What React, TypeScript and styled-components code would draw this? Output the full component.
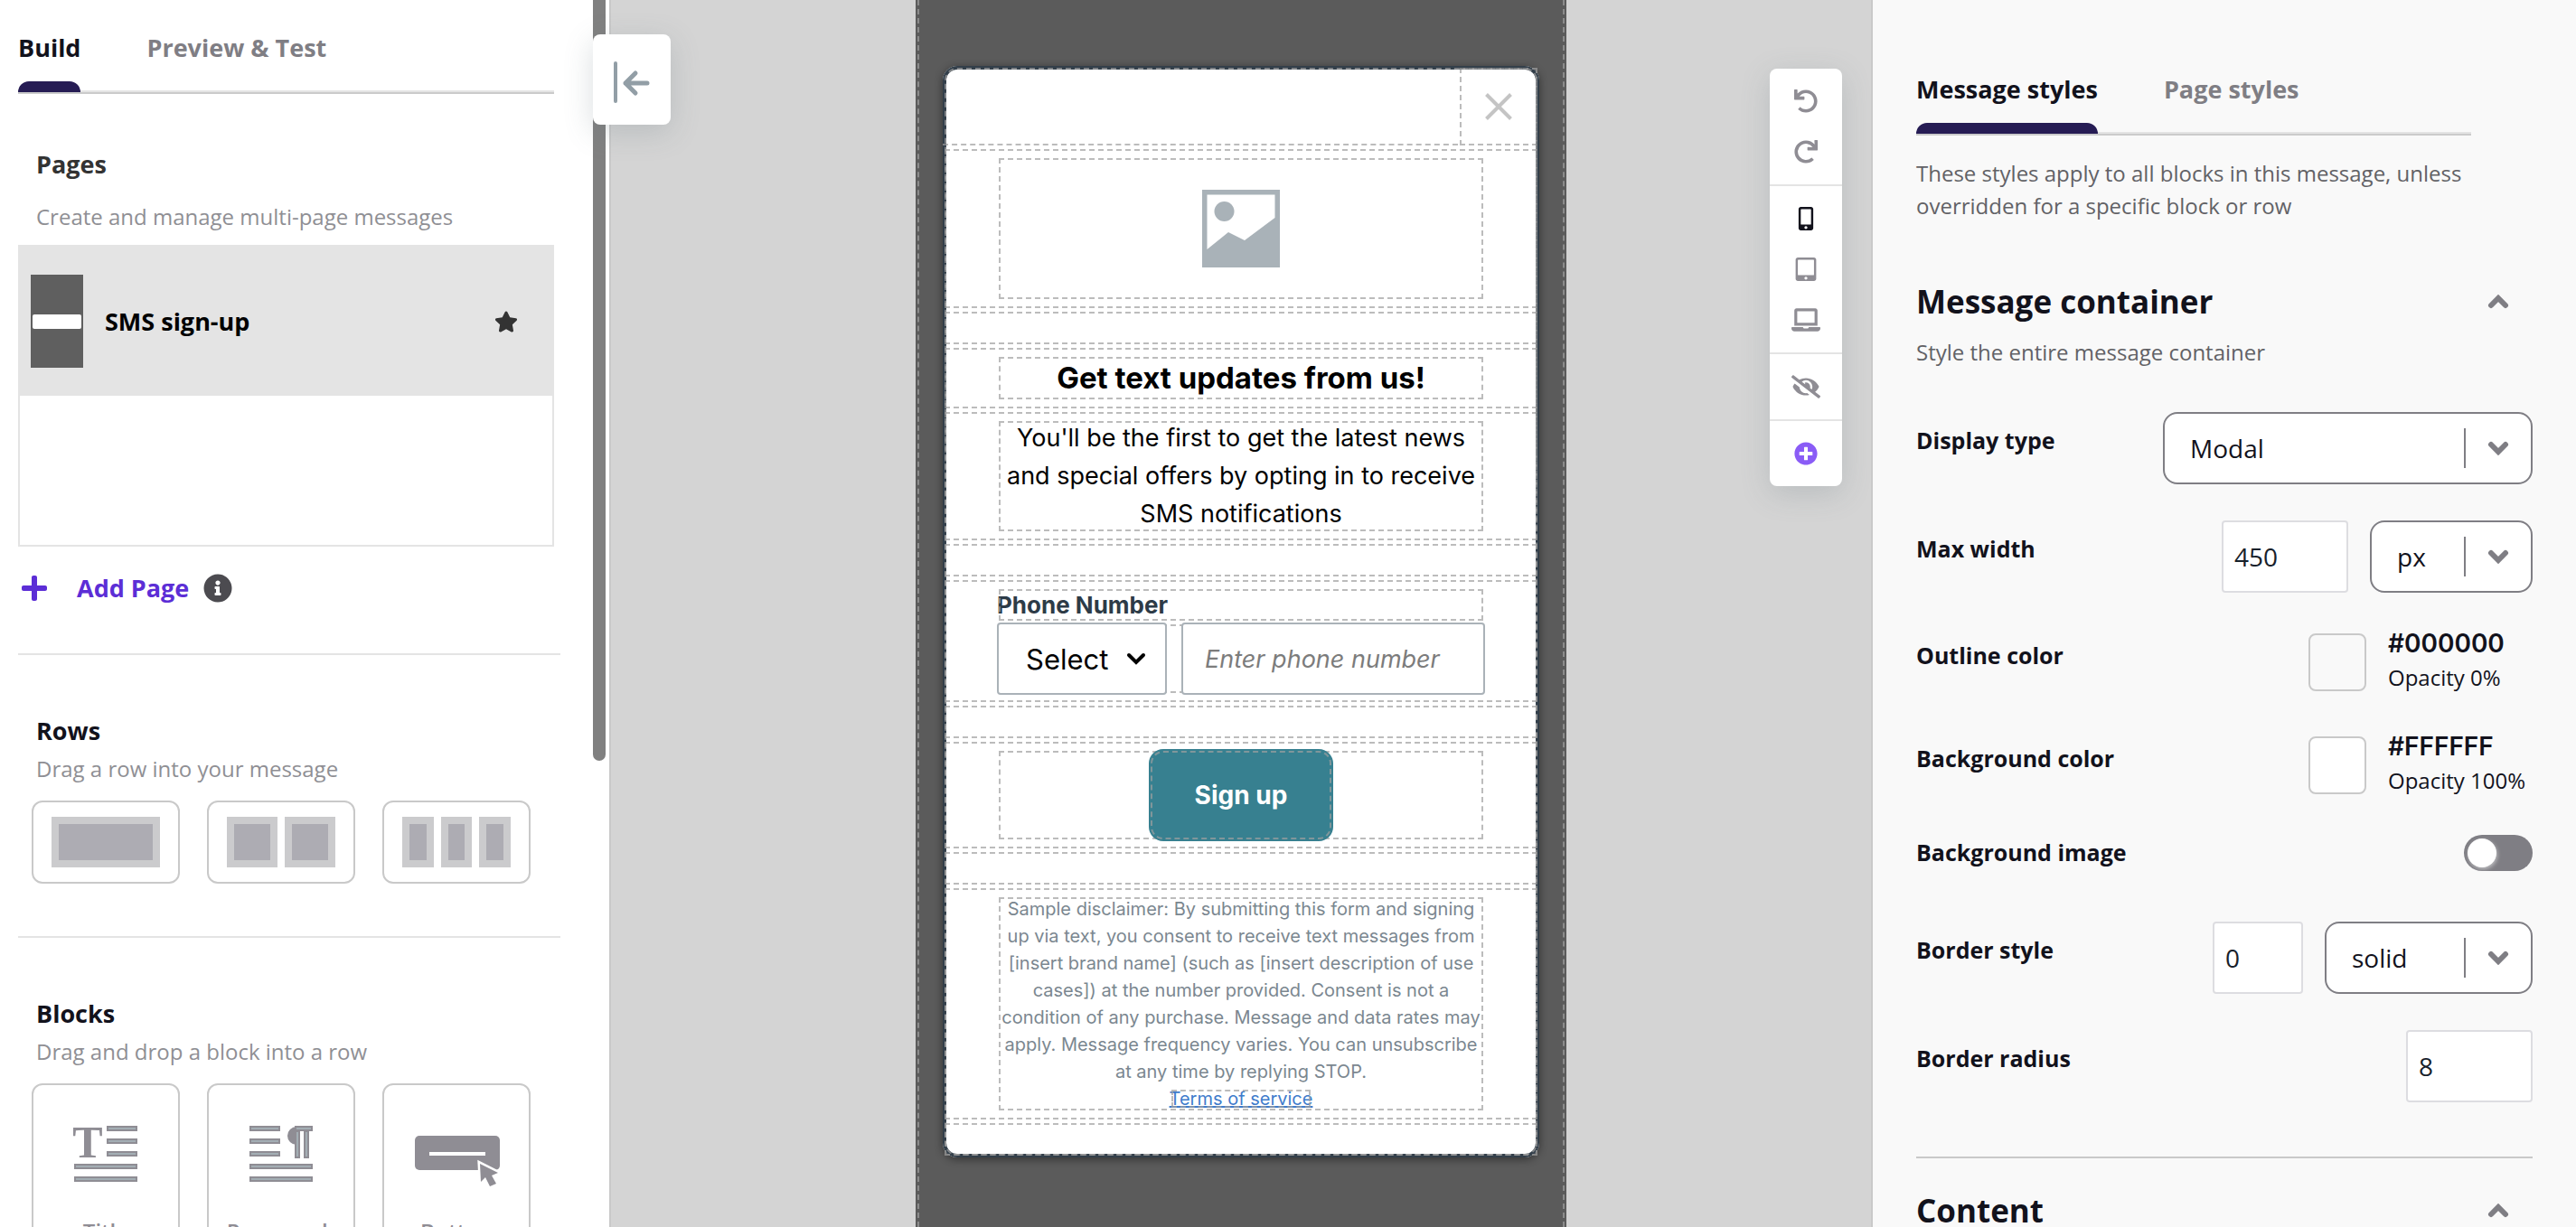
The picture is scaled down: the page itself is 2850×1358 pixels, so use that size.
import React from "react";
import styled, { createGlobalStyle, css } from "styled-components";
import {
  FaEyeSlash,
  FaInfoCircle,
  FaLaptop,
  FaMobileAlt,
  FaPlus,
  FaPlusCircle,
  FaRedo,
  FaStar,
  FaTabletAlt,
  FaUndo,
} from "react-icons/fa";

const ink = "#12121c";
const grey = "#7f7e84";
const iconGrey = "#8f8d94";
const rule = "#c9c9c9";
const guide = "rgba(160, 160, 160, 0.7)";
const uiFont = '"Open Sans", "Noto Sans", sans-serif';
const messageFont = 'Inter, "Liberation Sans", sans-serif';

const GlobalStyle = createGlobalStyle`
  *, *::before, *::after { box-sizing: border-box; }
  body { margin: 0; background: #d4d4d4; font-family: ${uiFont}; color: ${ink}; }
  h2, h3, p { margin: 0; }
  button, input, select { font: inherit; color: inherit; margin: 0; }
  button { padding: 0; border: 0; background: none; cursor: pointer; }
`;

const Editor = styled.div`
  display: grid;
  grid-template-columns: 676px minmax(0, 1fr) 780px;
  height: 100vh;
  overflow: hidden;
`;

/* ---------- shared pieces ---------- */

const TabList = styled.div<{ $width: number }>`
  display: flex;
  gap: 73px;
  max-width: ${(p) => p.$width}px;
  border-bottom: 2px solid #cbcbcb;
  box-shadow: inset 0 -2px #e4e4e4;
`;

const Tab = styled.button<{ $active?: boolean }>`
  display: flex;
  flex-direction: column;
  gap: 17px;
  font-size: 27px;
  line-height: 40px;
  font-weight: 700;
  color: ${(p) => (p.$active ? ink : grey)};
  &::after {
    content: "";
    height: 12px;
    width: 100%;
    border-radius: 12px 12px 0 0;
    background: ${(p) => (p.$active ? "#261c54" : "transparent")};
  }
`;

const Heading = styled.h3<{ $soft?: boolean }>`
  font-size: 27px;
  line-height: 40px;
  font-weight: 700;
  color: ${(p) => (p.$soft ? "#333" : ink)};
`;

const Hint = styled.p<{ $dark?: boolean }>`
  font-size: 24px;
  line-height: 36px;
  color: ${(p) => (p.$dark ? "#626266" : "#8f8f94")};
`;

/* ---------- left panel ---------- */

const BuildPanel = styled.aside`
  display: flex;
  background: #fff;
  border-right: 2px solid ${rule};
  padding-right: 4px;
  min-height: 0;
`;

const BuildContent = styled.div`
  flex: 1;
  padding: 33px 36px 0 20px;
  overflow: hidden;
`;

const ScrollThumb = styled.div`
  width: 14px;
  height: 62%;
  border-radius: 0 0 7px 7px;
  background: #808080;
`;

const PagesSection = styled.section`
  margin-right: 7px;
  padding-bottom: 52px;
`;

const PagesIntro = styled.div`
  display: grid;
  gap: 20px;
  padding: 58px 20px 13px;
`;

const PageList = styled.ul`
  list-style: none;
  margin: 0;
  padding: 0;
  height: 334px;
  border: 2px solid #e4e4e4;
`;

const PageItem = styled.li`
  display: flex;
  align-items: center;
  height: 165px;
  padding: 0 38px 0 12px;
  background: #e4e4e4;
  font-size: 27px;
  line-height: 40px;
  font-weight: 700;
  color: #000;
  svg {
    margin-left: auto;
    width: 26px;
    height: 26px;
    color: #333;
  }
`;

const PageThumb = styled.span`
  display: flex;
  align-items: center;
  width: 58px;
  height: 103px;
  margin-right: 24px;
  padding: 0 2px;
  background: #5f5f5f;
  &::before {
    content: "";
    width: 100%;
    height: 16px;
    border-radius: 2px;
    background: #fff;
  }
`;

const AddPageRow = styled.div`
  display: flex;
  align-items: center;
  gap: 16px;
  padding: 26px 0 0 2px;
`;

const AddPageButton = styled.button`
  display: flex;
  align-items: center;
  gap: 31px;
  font-size: 27px;
  line-height: 40px;
  font-weight: 700;
  color: #5c2ed6;
  svg {
    width: 32px;
    height: 32px;
  }
`;

const InfoButton = styled.button`
  display: flex;
  color: #4c4b50;
  svg {
    width: 32px;
    height: 32px;
  }
`;

const LibrarySection = styled.section`
  border-top: 2px solid #e4e4e4;
  padding: 64px 0 58px;
`;

const LibraryIntro = styled.div`
  display: grid;
  gap: 4px;
  padding: 0 20px 17px;
`;

const CardGrid = styled.div`
  display: grid;
  grid-template-columns: repeat(3, 164px);
  gap: 30px;
  padding-left: 15px;
`;

const cardFrame = css`
  border: 2px solid ${rule};
  border-radius: 12px;
  background: #fff;
`;

const RowCard = styled.button`
  ${cardFrame}
  display: flex;
  gap: 8px;
  height: 92px;
  padding: 16px 20px;
`;

const RowColumn = styled.span`
  flex: 1;
  border: 8px solid #cbcbcd;
  background: #adacb3;
  align-self: stretch;
`;

const BlockCard = styled.button`
  ${cardFrame}
  display: flex;
  flex-direction: column;
  align-items: center;
  gap: 33px;
  height: 212px;
  padding-top: 45px;
  font-size: 24px;
  line-height: 36px;
  font-weight: 600;
  color: ${iconGrey};
`;

const IconLine = ({ x, y, w }: { x: number; y: number; w: number }) => (
  <rect x={x + 1} y={y + 1} width={w - 2} height={4} fill="#a3aeb4" stroke={iconGrey} strokeWidth={2} />
);

const TitleIcon = () => (
  <svg width="70" height="66" viewBox="0 0 70 66" overflow="visible" aria-hidden="true">
    <text x="15" y="35" textAnchor="middle" fontFamily="Liberation Serif, serif" fontWeight="700" fontSize="50" fill={iconGrey}>
      T
    </text>
    <IconLine x={36} y={0} w={34} />
    <IconLine x={36} y={14} w={34} />
    <IconLine x={36} y={28} w={34} />
    <IconLine x={0} y={42} w={70} />
    <IconLine x={0} y={56} w={70} />
  </svg>
);

const ParagraphIcon = () => (
  <svg width="70" height="66" viewBox="0 0 70 66" aria-hidden="true">
    <IconLine x={0} y={0} w={34} />
    <IconLine x={0} y={14} w={34} />
    <IconLine x={0} y={28} w={34} />
    <IconLine x={0} y={42} w={70} />
    <IconLine x={0} y={56} w={70} />
    <path d="M52 1 A10 10 0 0 0 52 21 Z" fill={iconGrey} />
    <rect x="51" y="6" width="4" height="29" fill="#a3aeb4" stroke={iconGrey} strokeWidth="2" />
    <rect x="61" y="6" width="4" height="29" fill="#a3aeb4" stroke={iconGrey} strokeWidth="2" />
    <IconLine x={50} y={0} w={20} />
  </svg>
);

const ButtonIcon = () => (
  <svg width="96" height="66" viewBox="0 0 96 66" overflow="visible" aria-hidden="true">
    <rect x="2" y="11" width="94" height="38" rx="5" fill={iconGrey} />
    <rect x="18" y="29" width="62" height="4" fill="#fff" />
    <path d="M74 42 L75 62 L80 57 L85 67 L92 64 L87 55 L94 52 Z" fill={iconGrey} stroke="#fff" strokeWidth="5" paintOrder="stroke" />
  </svg>
);

/* ---------- canvas ---------- */

const Canvas = styled.main`
  display: grid;
  grid-template-columns: minmax(0, 1fr) 720px minmax(0, 1fr);
  align-items: start;
`;

const floating = css`
  background: #fff;
  border-radius: 8px;
  box-shadow: 0 8px 32px rgba(100, 115, 125, 0.24);
`;

const CollapseButton = styled.button`
  ${floating}
  position: relative;
  display: grid;
  place-items: center;
  width: 86px;
  height: 100px;
  margin: 38px 0 0 -20px;
  padding-top: 6px;
`;

const Backdrop = styled.div`
  height: 100vh;
  padding: 0 2px;
  background: #5b5b5b;
`;

const BackdropGuides = styled.div`
  height: 100%;
  padding: 73px 26px 0;
  border: 0 dashed ${guide};
  border-width: 0 2px;
`;

const guideLine = css`
  outline: 2px dashed ${guide};
  outline-offset: -4px;
`;

const Message = styled.article`
  ${guideLine}
  background: #fff;
  border-radius: 16px;
  box-shadow: inset 0 0 0 4px #333f4a, 0 2px 10px rgba(0, 0, 0, 0.45);
  font-family: ${messageFont};
  text-align: center;
  color: #000;
`;

const MessageRow = styled.div<{ $spacer?: boolean }>`
  ${guideLine}
  min-height: 40px;
  padding: ${(p) => (p.$spacer ? "0" : "10px 60px")};
`;

const CloseRow = styled.div`
  display: flex;
  justify-content: flex-end;
  height: 90px;
  padding-bottom: 2px;
  &::before {
    content: "";
    flex: 1;
    border-bottom: 2px dashed ${guide};
  }
`;

const CloseButton = styled.button`
  ${guideLine}
  display: grid;
  place-items: center;
  width: 90px;
  height: 90px;
`;

const ImageBlock = styled.div`
  ${guideLine}
  display: grid;
  place-items: center;
  height: 160px;
`;

const MessageTitle = styled.h2`
  ${guideLine}
  font-size: 33px;
  line-height: 51px;
  font-weight: 700;
`;

const MessageText = styled.p`
  ${guideLine}
  font-size: 27px;
  line-height: 42px;
`;

const PhoneLabel = styled.label`
  ${guideLine}
  display: block;
  font-size: 26px;
  line-height: 39px;
  font-weight: 700;
  text-align: left;
  color: #2d3b47;
`;

const PhoneFields = styled.div`
  ${guideLine}
  display: flex;
  gap: 16px;
  height: 80px;
`;

const phoneControl = css`
  position: relative;
  height: 80px;
  border: 2px solid #aab2b8;
  border-radius: 4px;
  background: #fff;
`;

const CountrySelectFrame = styled.div`
  ${phoneControl}
  display: grid;
  align-items: center;
  width: 188px;
  & > * {
    grid-area: 1 / 1;
  }
  & > svg {
    justify-self: end;
    margin-right: 20px;
    pointer-events: none;
  }
`;

const CountrySelect = styled.select`
  appearance: none;
  width: 100%;
  height: 76px;
  padding: 0 0 0 30px;
  border: 0;
  background: transparent;
  font-size: 31px;
`;

const PhoneInput = styled.input`
  ${phoneControl}
  flex: 1;
  min-width: 0;
  padding: 0 24px;
  font-size: 27px;
  &::placeholder {
    color: #7c7c7c;
    font-style: italic;
  }
`;

const SignUpBlock = styled.div`
  ${guideLine}
  height: 102px;
`;

const SignUpButton = styled.button`
  ${guideLine}
  position: relative;
  width: 204px;
  height: 102px;
  border-radius: 16px;
  background: #378090;
  color: #fff;
  font-size: 28px;
  font-weight: 700;
`;

const Disclaimer = styled.p`
  ${guideLine}
  font-size: 20px;
  line-height: 30px;
  color: #7b8790;
`;

const TermsLink = styled.a`
  ${guideLine}
  color: #3f7ccc;
  text-decoration: underline;
`;

const ToolColumn = styled.div`
  ${floating}
  justify-self: end;
  width: 80px;
  margin: 76px 32px 0 0;
`;

const ToolGroup = styled.div`
  display: grid;
  padding: 8px 0;
  & + & {
    border-top: 2px solid #e4e4e4;
  }
`;

const ToolButton = styled.button<{ $color?: string }>`
  display: grid;
  place-items: center;
  height: 56px;
  color: ${(p) => p.$color ?? iconGrey};
  svg {
    width: 32px;
    height: 26px;
  }
`;

/* ---------- right panel ---------- */

const StylePanel = styled.aside`
  border-left: 2px solid ${rule};
  background: #f9f9f9;
  padding: 79px 48px 0;
  overflow: hidden;
`;

const PanelNote = styled.div`
  padding: 24px 0 64px;
`;

const SectionHeader = styled.div`
  display: flex;
  justify-content: space-between;
  align-items: center;
  padding-right: 26px;
`;

const SectionTitle = styled.h2`
  font-size: 35px;
  line-height: 48px;
  font-weight: 700;
`;

const SectionHint = styled.div`
  padding: 14px 0 48px;
`;

const IconButton = styled.button`
  display: flex;
`;

const SettingRow = styled.div<{ $after: number }>`
  display: flex;
  align-items: flex-start;
  justify-content: space-between;
  margin-bottom: ${(p) => p.$after}px;
`;

const SettingLabel = styled.label`
  padding: 13px 0 11px;
  font-size: 25px;
  line-height: 36px;
  font-weight: 700;
`;

const Controls = styled.div`
  display: flex;
  gap: 24px;
`;

const NumberInput = styled.input<{ $width: number }>`
  width: ${(p) => p.$width}px;
  height: 80px;
  padding: 0 12px;
  border: 2px solid #dddde1;
  border-radius: 4px;
  background: #fff;
  font-size: 28px;
  color: #17212b;
`;

const DropdownFrame = styled.div<{ $width: number }>`
  display: grid;
  align-items: center;
  width: ${(p) => p.$width}px;
  height: 80px;
  border: 2px solid ${grey};
  border-radius: 16px;
  background: #fff;
  & > * {
    grid-area: 1 / 1;
  }
`;

const DropdownSelect = styled.select`
  appearance: none;
  width: 100%;
  height: 76px;
  padding: 0 80px 0 28px;
  border: 0;
  border-radius: 16px;
  background: transparent;
  font-size: 28px;
`;

const DropdownMark = styled.span`
  display: grid;
  place-items: center;
  justify-self: end;
  width: 74px;
  height: 44px;
  border-left: 2px solid ${grey};
  pointer-events: none;
`;

const ColorControl = styled.div`
  display: flex;
  align-items: center;
  gap: 24px;
  width: 248px;
`;

const Swatch = styled.button<{ $color: string }>`
  width: 64px;
  height: 64px;
  border: 2px solid ${rule};
  border-radius: 8px;
  background: ${(p) => p.$color};
`;

const ColorText = styled.div`
  display: grid;
  gap: 2px;
  padding-bottom: 4px;
  line-height: 36px;
  font-size: 24px;
  white-space: nowrap;
`;

const ColorValue = styled.strong`
  font-family: ${messageFont};
  font-size: 28px;
  font-weight: 600;
`;

const Toggle = styled.input`
  appearance: none;
  width: 76px;
  height: 40px;
  margin: 12px 0;
  padding: 4px;
  border-radius: 20px;
  background: ${grey};
  &::before {
    content: "";
    display: block;
    width: 32px;
    height: 32px;
    border-radius: 50%;
    background: #fff;
    box-shadow: 1px 2px 4px rgba(255, 255, 255, 0.5);
  }
`;

const SectionDivider = styled.hr`
  margin: 0 0 34px;
  border: 0;
  height: 2px;
  background: ${rule};
`;

const Chevron = ({ up }: { up?: boolean }) => (
  <svg width="24" height="16" viewBox="0 0 24 16" aria-hidden="true">
    <path d={up ? "M4 12 L12 4 L20 12" : "M4 4 L12 12 L20 4"} fill="none" stroke={grey} strokeWidth="6" strokeLinecap="round" />
  </svg>
);

type DropdownProps = { id: string; width: number; options: string[]; label?: string };

const Dropdown = ({ id, width, options, label }: DropdownProps) => (
  <DropdownFrame $width={width}>
    <DropdownSelect id={id} aria-label={label} defaultValue={options[0]}>
      {options.map((o) => (
        <option key={o}>{o}</option>
      ))}
    </DropdownSelect>
    <DropdownMark>
      <Chevron />
    </DropdownMark>
  </DropdownFrame>
);

type ColorProps = { id: string; fill: string; value: string; opacity: string };

const ColorPicker = ({ id, fill, value, opacity }: ColorProps) => (
  <ColorControl>
    <Swatch id={id} $color={fill} type="button" />
    <ColorText>
      <ColorValue>{value}</ColorValue>
      <span>Opacity {opacity}</span>
    </ColorText>
  </ColorControl>
);

export default function App() {
  return (
    <Editor>
      <GlobalStyle />
      <BuildPanel>
        <BuildContent>
          <TabList $width={593}>
            <Tab $active>Build</Tab>
            <Tab>Preview &amp; Test</Tab>
          </TabList>
          <PagesSection>
            <PagesIntro>
              <Heading $soft>Pages</Heading>
              <Hint>Create and manage multi-page messages</Hint>
            </PagesIntro>
            <PageList>
              <PageItem>
                <PageThumb />
                SMS sign-up
                <FaStar />
              </PageItem>
            </PageList>
            <AddPageRow>
              <AddPageButton>
                <FaPlus />
                Add Page
              </AddPageButton>
              <InfoButton aria-label="About pages">
                <FaInfoCircle />
              </InfoButton>
            </AddPageRow>
          </PagesSection>
          <LibrarySection>
            <LibraryIntro>
              <Heading>Rows</Heading>
              <Hint>Drag a row into your message</Hint>
            </LibraryIntro>
            <CardGrid>
              {[1, 2, 3].map((n) => (
                <RowCard key={n} aria-label={`${n} column row`}>
                  {Array.from({ length: n }, (_, i) => (
                    <RowColumn key={i} />
                  ))}
                </RowCard>
              ))}
            </CardGrid>
          </LibrarySection>
          <LibrarySection>
            <LibraryIntro>
              <Heading>Blocks</Heading>
              <Hint>Drag and drop a block into a row</Hint>
            </LibraryIntro>
            <CardGrid>
              <BlockCard>
                <TitleIcon />
                Title
              </BlockCard>
              <BlockCard>
                <ParagraphIcon />
                Paragraph
              </BlockCard>
              <BlockCard>
                <ButtonIcon />
                Button
              </BlockCard>
            </CardGrid>
          </LibrarySection>
        </BuildContent>
        <ScrollThumb />
      </BuildPanel>

      <Canvas>
        <CollapseButton aria-label="Collapse panel">
          <svg width="42" height="48" viewBox="0 0 42 48" fill="none" stroke="#929ea6" strokeWidth="4" strokeLinecap="round" aria-hidden="true">
            <path d="M3 3 V45" />
            <path d="M38 25 H14 M25 14 L14 25 L25 36" strokeWidth="5" strokeLinejoin="round" />
          </svg>
        </CollapseButton>

        <Backdrop>
          <BackdropGuides>
            <Message>
              <CloseRow>
                <CloseButton aria-label="Close">
                  <svg width="30" height="30" viewBox="0 0 30 30" aria-hidden="true">
                    <path d="M1.500 1.500 L28.500 28.500 M28.500 1.500 L1.500 28.500" stroke="#c4c4c4" strokeWidth="4" />
                  </svg>
                </CloseButton>
              </CloseRow>
              <MessageRow>
                <ImageBlock>
                  <svg width="86" height="86" viewBox="0 0 86 86" role="img" aria-label="Image placeholder">
                    <rect width="86" height="86" fill="#a9b2b8" />
                    <path d="M5.500 5.500 H80.500 V31 L47 56 L29 47 L5.500 66 Z" fill="#fff" />
                    <circle cx="24.500" cy="24" r="11" fill="#a9b2b8" />
                  </svg>
                </ImageBlock>
              </MessageRow>
              <MessageRow $spacer />
              <MessageRow>
                <MessageTitle>Get text updates from us!</MessageTitle>
              </MessageRow>
              <MessageRow>
                <MessageText>You'll be the first to get the latest news and special offers by opting in to receive SMS notifications</MessageText>
              </MessageRow>
              <MessageRow $spacer />
              <MessageRow>
                <PhoneLabel htmlFor="phone">Phone Number</PhoneLabel>
                <PhoneFields>
                  <CountrySelectFrame>
                    <CountrySelect aria-label="Country code">
                      <option>Select</option>
                    </CountrySelect>
                    <svg width="24" height="16" viewBox="0 0 24 16" aria-hidden="true">
                      <path d="M4 4 L12 12 L20 4" fill="none" stroke="#000" strokeWidth="4" strokeLinecap="round" />
                    </svg>
                  </CountrySelectFrame>
                  <PhoneInput id="phone" type="tel" placeholder="Enter phone number" />
                </PhoneFields>
              </MessageRow>
              <MessageRow $spacer />
              <MessageRow>
                <SignUpBlock>
                  <SignUpButton>Sign up</SignUpButton>
                </SignUpBlock>
              </MessageRow>
              <MessageRow $spacer />
              <MessageRow>
                <Disclaimer>
                  Sample disclaimer: By submitting this form and signing up via text, you consent to receive text messages from
                  [insert brand name] (such as [insert description of use cases]) at the number provided. Consent is not a
                  condition of any purchase. Message and data rates may apply. Message frequency varies. You can unsubscribe
                  at any time by replying STOP.
                  <br />
                  <TermsLink href="#terms">Terms of service</TermsLink>
                </Disclaimer>
              </MessageRow>
              <MessageRow $spacer />
            </Message>
          </BackdropGuides>
        </Backdrop>

        <ToolColumn>
          <ToolGroup>
            <ToolButton aria-label="Undo"><FaUndo /></ToolButton>
            <ToolButton aria-label="Redo"><FaRedo /></ToolButton>
          </ToolGroup>
          <ToolGroup>
            <ToolButton aria-label="Mobile" $color={ink}><FaMobileAlt /></ToolButton>
            <ToolButton aria-label="Tablet"><FaTabletAlt /></ToolButton>
            <ToolButton aria-label="Desktop"><FaLaptop /></ToolButton>
          </ToolGroup>
          <ToolGroup>
            <ToolButton aria-label="Hide guides"><FaEyeSlash /></ToolButton>
          </ToolGroup>
          <ToolGroup>
            <ToolButton aria-label="Add" $color="#8a5cf6"><FaPlusCircle /></ToolButton>
          </ToolGroup>
        </ToolColumn>
      </Canvas>

      <StylePanel>
        <TabList $width={614}>
          <Tab $active>Message styles</Tab>
          <Tab>Page styles</Tab>
        </TabList>
        <PanelNote>
          <Hint $dark>These styles apply to all blocks in this message, unless overridden for a specific block or row</Hint>
        </PanelNote>
        <SectionHeader>
          <SectionTitle>Message container</SectionTitle>
          <IconButton aria-label="Collapse section"><Chevron up /></IconButton>
        </SectionHeader>
        <SectionHint>
          <Hint $dark>Style the entire message container</Hint>
        </SectionHint>

        <SettingRow $after={40}>
          <SettingLabel htmlFor="display-type">Display type</SettingLabel>
          <Dropdown id="display-type" width={409} options={["Modal", "Banner"]} />
        </SettingRow>
        <SettingRow $after={38}>
          <SettingLabel htmlFor="max-width">Max width</SettingLabel>
          <Controls>
            <NumberInput id="max-width" $width={140} defaultValue="450" />
            <Dropdown id="max-width-unit" label="Width unit" width={180} options={["px", "%"]} />
          </Controls>
        </SettingRow>
        <SettingRow $after={36}>
          <SettingLabel htmlFor="outline-color">Outline color</SettingLabel>
          <ColorPicker id="outline-color" fill="transparent" value="#000000" opacity="0%" />
        </SettingRow>
        <SettingRow $after={26}>
          <SettingLabel htmlFor="background-color">Background color</SettingLabel>
          <ColorPicker id="background-color" fill="#fff" value="#FFFFFF" opacity="100%" />
        </SettingRow>
        <SettingRow $after={44}>
          <SettingLabel htmlFor="background-image">Background image</SettingLabel>
          <Toggle id="background-image" type="checkbox" role="switch" />
        </SettingRow>
        <SettingRow $after={40}>
          <SettingLabel htmlFor="border-width">Border style</SettingLabel>
          <Controls>
            <NumberInput id="border-width" $width={100} defaultValue="0" />
            <Dropdown id="border-style" label="Border line" width={230} options={["solid", "dashed"]} />
          </Controls>
        </SettingRow>
        <SettingRow $after={60}>
          <SettingLabel htmlFor="border-radius">Border radius</SettingLabel>
          <NumberInput id="border-radius" $width={140} defaultValue="8" />
        </SettingRow>
        <SectionDivider />
        <SectionHeader>
          <SectionTitle>Content</SectionTitle>
          <IconButton aria-label="Collapse section"><Chevron up /></IconButton>
        </SectionHeader>
      </StylePanel>
    </Editor>
  );
}
